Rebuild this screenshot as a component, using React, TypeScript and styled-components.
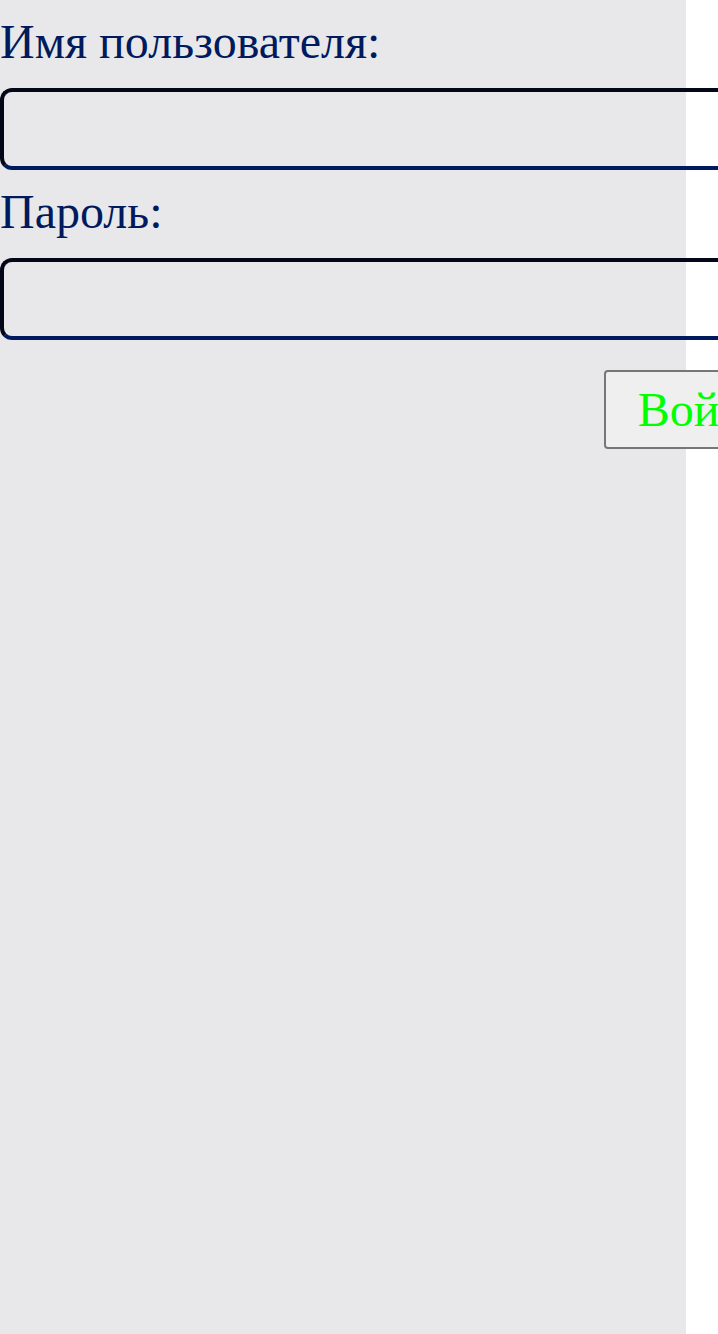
import React from 'react';
import styled, { createGlobalStyle } from 'styled-components';

const GlobalStyle = createGlobalStyle`
  html, body {
    margin: 0;
    padding: 0;
    background: #ffffff;
    overflow: hidden;
  }
`;

const Panel = styled.div`
  width: 686px;
  min-height: 100vh;
  background-color: #e8e8ea;
`;

const Form = styled.form`
  width: 800px;
  display: flex;
  flex-direction: column;
  font-family: 'Liberation Serif', 'Times New Roman', serif;
`;

const Label = styled.label`
  display: block;
  margin-top: 14px;
  font-size: 48px;
  color: #001a5e;
`;

const Input = styled.input`
  box-sizing: border-box;
  width: 100%;
  height: 82px;
  margin: 19px 0 0;
  padding: 0 12px;
  border: 4px solid;
  border-color: #030718 #001a5e #001a5e #030718;
  border-radius: 12px;
  background: transparent;
  font-family: inherit;
  font-size: 48px;
  outline: none;
`;

const Actions = styled.div`
  display: flex;
  justify-content: flex-end;
  margin-top: 30px;
`;

const SubmitButton = styled.button`
  box-sizing: border-box;
  height: 79px;
  padding: 0 32px;
  border: 2px solid #767676;
  border-radius: 4px;
  background-color: #efefef;
  color: #00ff00;
  font-family: inherit;
  font-size: 48px;
`;

export default function App() {
  return (
    <>
      <GlobalStyle />
      <Panel>
        <Form onSubmit={(e) => e.preventDefault()}>
          <Label htmlFor="username">Имя пользователя:</Label>
          <Input id="username" type="text" />
          <Label htmlFor="password">Пароль:</Label>
          <Input id="password" type="password" />
          <Actions>
            <SubmitButton type="submit">Войти</SubmitButton>
          </Actions>
        </Form>
      </Panel>
    </>
  );
}
